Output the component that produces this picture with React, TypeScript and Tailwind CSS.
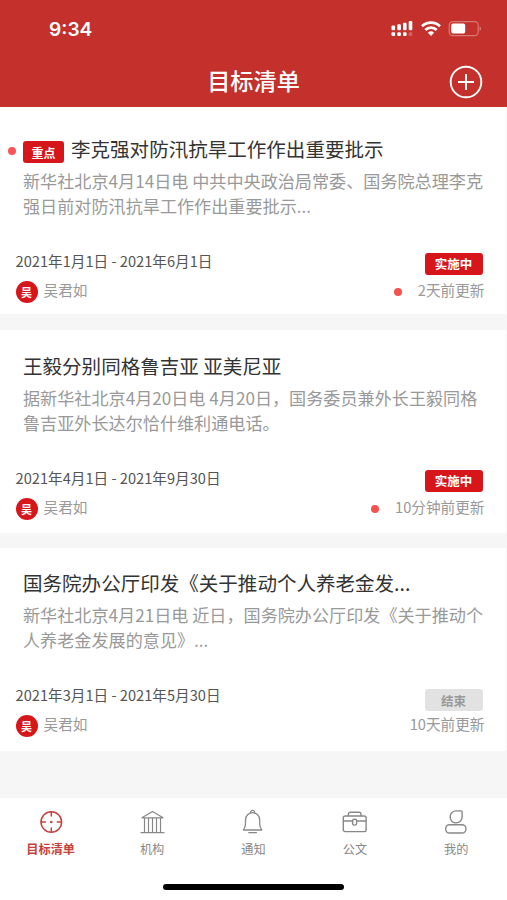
import type { ReactNode } from 'react';
import clsx from 'clsx';

type Goal = {
  title: string;
  lines: string[];
  period: string;
  owner: string;
  updated: string;
  status: string;
  important?: boolean;
  unread?: boolean;
  done?: boolean;
  className: string;
};

const GOALS: Goal[] = [
  {
    title: '李克强对防汛抗旱工作作出重要批示',
    lines: ['新华社北京4月14日电 中共中央政治局常委、国务院总理李克', '强日前对防汛抗旱工作作出重要批示...'],
    period: '2021年1月1日 - 2021年6月1日',
    owner: '吴君如',
    updated: '2天前更新',
    status: '实施中',
    important: true,
    unread: true,
    className: 'h-[207px] pt-[27px]',
  },
  {
    title: '王毅分别同格鲁吉亚 亚美尼亚',
    lines: ['据新华社北京4月20日电 4月20日，国务委员兼外长王毅同格', '鲁吉亚外长达尔恰什维利通电话。'],
    period: '2021年4月1日 - 2021年9月30日',
    owner: '吴君如',
    updated: '10分钟前更新',
    status: '实施中',
    unread: true,
    className: 'mt-4 h-[203px] pt-[21px]',
  },
  {
    title: '国务院办公厅印发《关于推动个人养老金发...',
    lines: ['新华社北京4月21日电 近日，国务院办公厅印发《关于推动个', '人养老金发展的意见》...'],
    period: '2021年3月1日 - 2021年5月30日',
    owner: '吴君如',
    updated: '10天前更新',
    status: '结束',
    done: true,
    className: 'mt-[15px] h-[203px] pt-5',
  },
];

function NavIcon({ children }: { children: ReactNode }) {
  return (
    <svg width="26" height="26" viewBox="0 0 26 26" fill="none" stroke="currentColor" strokeLinecap="round" strokeLinejoin="round">
      {children}
    </svg>
  );
}

const TABS = [
  {
    label: '目标清单',
    active: true,
    icon: (
      <NavIcon>
        <g strokeWidth="1.5">
          <circle cx="13.3" cy="13" r="10.3" />
          <path d="M13.3 3v4M13.3 19v4M3.3 13h4M19.3 13h4" />
        </g>
        <circle cx="13.3" cy="13" r="1.3" fill="currentColor" stroke="none" />
      </NavIcon>
    ),
  },
  {
    label: '机构',
    icon: (
      <NavIcon>
        <path d="M2 23.7h23M3 8.8h21M3.3 8.5l10.2-6.1 10.2 6.1M5.5 9v14.5M9.5 9v14.5M13.5 9v14.5M17.5 9v14.5M21.5 9v14.5" strokeWidth="1.2" />
      </NavIcon>
    ),
  },
  {
    label: '通知',
    icon: (
      <NavIcon>
        <path d="M10.8 4.2a2 2 0 1 1 3.6 0M3.4 21h18.4c-1.3-1.9-2.1-3.6-2.1-6.2v-4a7.1 7.1 0 0 0-14.2 0v4c0 2.6-.8 4.3-2.1 6.2ZM8.8 23.7h7.6" strokeWidth="1.3" />
      </NavIcon>
    ),
  },
  {
    label: '公文',
    icon: (
      <NavIcon>
        <g strokeWidth="1.4">
          <rect x="1.3" y="7" width="22.8" height="15.6" rx="1.8" />
          <path d="M6.4 6.8V5.2a2 2 0 0 1 2-2H17a2 2 0 0 1 2 2v1.6M1.5 12h9.1M14.6 12h9.3" />
          <rect x="10.6" y="10.3" width="4" height="5.8" rx="1.6" />
        </g>
      </NavIcon>
    ),
  },
  {
    label: '我的',
    icon: (
      <NavIcon>
        <g strokeWidth="1.4">
          <path d="M13.3 1.9h4.9a.9.9 0 0 1 .9.9v4.9a6 6 0 1 1-5.8-5.8Z" />
          <rect x="2.7" y="15.7" width="20.2" height="8.3" rx="3.8" />
        </g>
      </NavIcon>
    ),
  },
];

function StatusIcons() {
  return (
    <svg width="92" height="20" viewBox="0 0 92 20" fill="#fff">
      {/* dual sim signal */}
      <rect x="1.5" y="6.5" width="3.6" height="4.8" rx="1" />
      <rect x="7.3" y="5.3" width="3.6" height="6" rx="1" />
      <rect x="13" y="3.7" width="3.6" height="7.6" rx="1" />
      <rect x="18.7" y="2" width="3.6" height="9.3" rx="1" />
      <rect x="1.5" y="13.2" width="3.6" height="3.8" rx="1" />
      <rect x="7.3" y="13.2" width="3.6" height="3.8" rx="1" />
      <rect x="13" y="13.2" width="3.6" height="3.8" rx="1" />
      <rect x="18.7" y="13.2" width="3.6" height="3.8" rx="1" opacity="0.25" />
      {/* wifi */}
      <g fill="none" stroke="#fff" strokeWidth="2.7">
        <path d="M32 7.3a12.8 12.8 0 0 1 18 0" />
        <path d="M35.3 11a8.1 8.1 0 0 1 11.4 0" />
      </g>
      <path d="M37.9 13.8a4.5 4.5 0 0 1 6.2 0L41 17Z" />
      {/* battery */}
      <rect x="59.2" y="2.6" width="29" height="14" rx="3.6" fill="none" stroke="#fff" strokeOpacity="0.35" strokeWidth="1.2" />
      <rect x="61.2" y="4.6" width="14" height="10" rx="1.8" />
      <path d="M89.6 7.4c1.8.6 1.8 3.8 0 4.4Z" opacity="0.4" />
    </svg>
  );
}

function GoalCard({ goal }: { goal: Goal }) {
  return (
    <article className={clsx('mr-[1.5px] bg-white', goal.className)}>
      <div className="flex h-[30px] items-center pl-[23px]">
        {goal.important && (
          <>
            <span className="-ml-[15px] mr-[7px] mt-[4px] size-2 shrink-0 rounded-full bg-[#fa5558]" />
            <span className="mr-[7px] mt-[6px] flex h-[22px] w-[41px] shrink-0 items-center justify-center rounded-[3px] bg-[#d7161b] pt-[2px] text-[12px] font-bold text-white">
              重点
            </span>
          </>
        )}
        <h2 className="whitespace-nowrap text-[19.55px] text-[#333]">{goal.title}</h2>
      </div>

      <div className="mt-[5px] pl-[23px] text-[17.12px] leading-[24.5px] text-[#999]">
        {goal.lines.map((line) => (
          <p key={line} className="whitespace-nowrap">{line}</p>
        ))}
      </div>

      <div className="mt-[32px] flex h-[22px] items-center justify-between pl-[15.5px] pr-[23px]">
        <span className="text-[14.65px] text-[#555]">{goal.period}</span>
        <span
          className={clsx(
            'flex h-[22px] w-[58px] items-center justify-center rounded-[3px] pt-[2px] text-[12.5px] font-bold',
            goal.done ? 'mt-[10px] bg-[#e2e2e2] text-[#999]' : 'mt-[5px] bg-[#d7161b] text-white',
          )}
        >
          {goal.status}
        </span>
      </div>

      <div className="mt-[9px] flex h-[22px] items-center pl-[15.5px] pr-[21px] text-[14.65px] text-[#999]">
        <span className="flex size-[22px] items-center justify-center rounded-full bg-[#d7161b] text-[11px] font-bold text-white">
          {goal.owner[0]}
        </span>
        <span className="-mt-[4px] ml-[6px]">{goal.owner}</span>
        {goal.unread && <span className="ml-auto mr-4 size-2 rounded-full bg-[#f3524f]" />}
        <span className={clsx('-mt-[4px]', !goal.unread && 'ml-auto')}>{goal.updated}</span>
      </div>
    </article>
  );
}

export default function App() {
  return (
    <div className="flex h-[900px] w-[507px] flex-col overflow-hidden bg-[#f6f6f6] font-['Noto_Sans_CJK_SC',sans-serif]">
      <header className="h-[107px] shrink-0 bg-[#c4302b] text-white">
        <div className="flex h-[57px] items-center justify-between pl-[49px] pr-[25px]">
          <span className="mt-px font-['Inter',sans-serif] text-[19.2px] font-semibold">9:34</span>
          <StatusIcons />
        </div>
        <div className="grid h-[49px] grid-cols-[1fr_auto_1fr] items-center pr-6">
          <span />
          <h1 className="-mt-[3px] ml-6 text-[23.2px] font-medium">目标清单</h1>
          <svg className="justify-self-end" width="34" height="34" viewBox="0 0 34 34" fill="none" stroke="#fff" strokeWidth="1.9">
            <circle cx="17" cy="17" r="15.3" />
            <path d="M17 9v16M9 17h16" />
          </svg>
        </div>
      </header>

      <main className="flex-1">
        {GOALS.map((goal) => (
          <GoalCard key={goal.title} goal={goal} />
        ))}
      </main>

      <footer className="flex h-[102px] shrink-0 flex-col items-center bg-white">
        <nav className="grid w-full grid-cols-5 pt-[11px]">
          {TABS.map((tab) => (
            <button
              key={tab.label}
              className={clsx('flex flex-col items-center', tab.active ? 'font-bold text-[#c4423e]' : 'text-[#888]')}
            >
              {tab.icon}
              <span className="mt-[4px] text-[12.2px] leading-5">{tab.label}</span>
            </button>
          ))}
        </nav>
        <div className="mt-[25px] h-[6px] w-[181px] rounded-full bg-black" />
      </footer>
    </div>
  );
}
